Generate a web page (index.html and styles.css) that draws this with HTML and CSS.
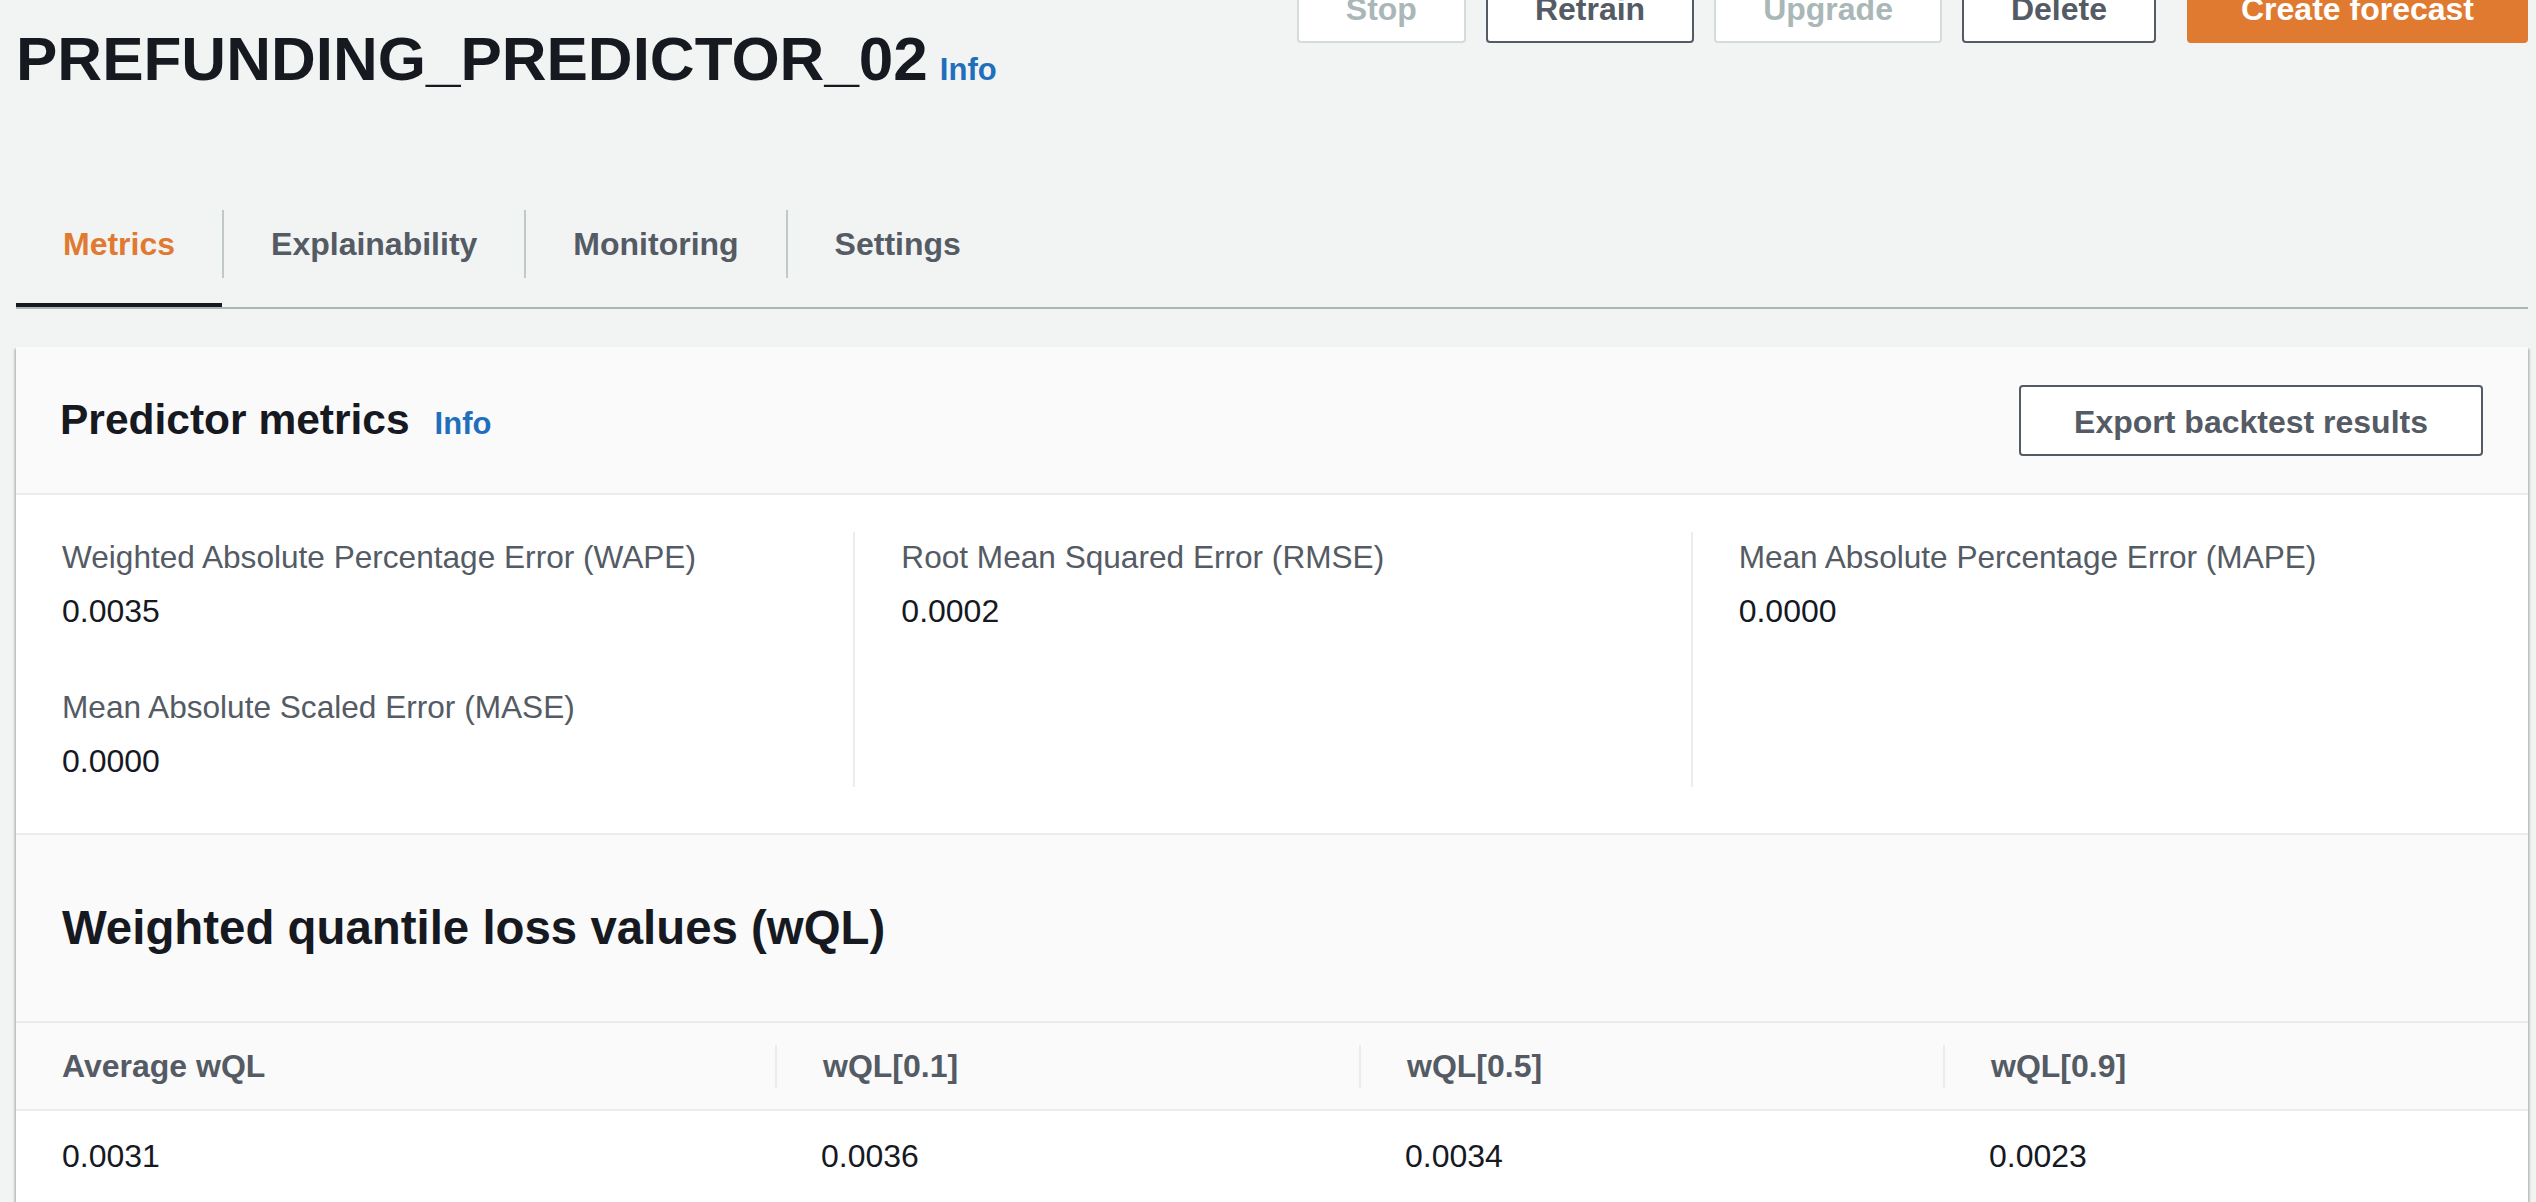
FILE: index.html
```html
<!DOCTYPE html>
<html lang="en">
<head>
<meta charset="utf-8">
<title>PREFUNDING_PREDICTOR_02</title>
<link rel="stylesheet" href="styles.css">
</head>
<body>
<div class="page">
  <header class="page-header">
    <h1 class="title">PREFUNDING_PREDICTOR_02<a class="info info-title">Info</a></h1>
    <div class="actions">
      <button class="btn btn-disabled">Stop</button>
      <button class="btn">Retrain</button>
      <button class="btn btn-disabled">Upgrade</button>
      <button class="btn">Delete</button>
      <button class="btn btn-primary">Create forecast</button>
    </div>
  </header>

  <nav class="tabs">
    <div class="tab active"><span class="tab-label">Metrics</span></div>
    <div class="tab"><span class="tab-label">Explainability</span></div>
    <div class="tab"><span class="tab-label">Monitoring</span></div>
    <div class="tab"><span class="tab-label">Settings</span></div>
  </nav>

  <section class="panel">
    <div class="panel-header">
      <div class="panel-title">
        <h2 class="h2">Predictor metrics</h2><a class="info info-h2">Info</a>
      </div>
      <button class="btn btn-export">Export backtest results</button>
    </div>

    <div class="metrics">
      <div class="metric-col">
        <div class="kv">
          <div class="kv-label">Weighted Absolute Percentage Error (WAPE)</div>
          <div class="kv-value">0.0035</div>
        </div>
        <div class="kv">
          <div class="kv-label">Mean Absolute Scaled Error (MASE)</div>
          <div class="kv-value">0.0000</div>
        </div>
      </div>
      <div class="metric-col">
        <div class="kv">
          <div class="kv-label">Root Mean Squared Error (RMSE)</div>
          <div class="kv-value">0.0002</div>
        </div>
      </div>
      <div class="metric-col">
        <div class="kv">
          <div class="kv-label">Mean Absolute Percentage Error (MAPE)</div>
          <div class="kv-value">0.0000</div>
        </div>
      </div>
    </div>

    <div class="wql-header">
      <h2 class="wql-title">Weighted quantile loss values (wQL)</h2>
    </div>

    <div class="table">
      <div class="trow thead">
        <div class="th">Average wQL</div>
        <div class="th">wQL[0.1]</div>
        <div class="th">wQL[0.5]</div>
        <div class="th">wQL[0.9]</div>
      </div>
      <div class="trow tbody">
        <div class="td">0.0031</div>
        <div class="td">0.0036</div>
        <div class="td">0.0034</div>
        <div class="td">0.0023</div>
      </div>
    </div>
  </section>
</div>
</body>
</html>
```

FILE: styles.css
```css
* {
  box-sizing: border-box;
}

html, body {
  margin: 0;
  padding: 0;
  background: #f2f3f3;
  overflow: hidden;
}

body {
  font-family: "Liberation Sans", Arial, Helvetica, sans-serif;
  font-size: 32px;
  line-height: 46px;
  color: #16191f;
}

.page {
  padding: 0 8px 0 16px;
}

/* ---------- header ---------- */
.page-header {
  display: flex;
  justify-content: space-between;
  align-items: flex-start;
  margin-top: -28px;
}

.title {
  margin: 47px 0 0 0;
  font-size: 62px;
  line-height: 80px;
  font-weight: 700;
  color: #16191f;
  white-space: nowrap;
}

.info {
  font-weight: 700;
  color: #1f6fbc;
  text-decoration: none;
}

.info-title {
  font-size: 31px;
  line-height: 1;
  margin-left: 12px;
}

.info-h2 {
  font-size: 31px;
  margin-left: 25px;
}

.actions {
  display: flex;
  gap: 20px;
}

.btn {
  font-family: "Liberation Sans", Arial, Helvetica, sans-serif;
  font-size: 32px;
  font-weight: 700;
  line-height: 46px;
  padding: 12px 47px 9px;
  border: 2px solid #545b64;
  border-radius: 4px;
  background: #ffffff;
  color: #545b64;
  white-space: nowrap;
}

.btn-disabled {
  border-color: #d5dbdb;
  color: #aab7b8;
}

.btn-primary {
  margin-left: 11px;
  padding-left: 52px;
  padding-right: 52px;
  background: #e07a31;
  border-color: #e07a31;
  color: #ffffff;
}

.btn-export {
  padding-left: 53px;
  padding-right: 53px;
}

/* ---------- tabs ---------- */
.tabs {
  display: flex;
  margin-top: 82px;
  border-bottom: 2px solid #aab7b8;
}

.tab {
  height: 126px;
  padding-top: 4px;
  display: flex;
  align-items: center;
  border-bottom: 4px solid transparent;
}

.tab.active {
  border-bottom-color: #16191f;
}

.tab-label {
  display: block;
  height: 68px;
  line-height: 68px;
  padding: 0 47px;
  font-weight: 700;
  color: #545b64;
}

.tab + .tab .tab-label {
  border-left: 2px solid #c1c8c9;
}

.tab.active .tab-label {
  color: #e07a31;
}

/* ---------- panel ---------- */
.panel {
  margin-top: 38px;
  background: #ffffff;
  box-shadow: 0 2px 2px 0 rgba(0, 28, 36, 0.3), 2px 2px 2px 0 rgba(0, 28, 36, 0.15), -2px 2px 2px 0 rgba(0, 28, 36, 0.15);
}

.panel-header {
  height: 148px;
  display: flex;
  align-items: center;
  justify-content: space-between;
  padding: 0 45px 0 44px;
  background: #fafafa;
  border-bottom: 2px solid #eaeded;
}

.panel-title {
  display: flex;
  align-items: baseline;
}

.h2 {
  margin: 0;
  font-size: 42.5px;
  line-height: 52px;
  font-weight: 700;
  color: #16191f;
}

.metrics {
  display: grid;
  grid-template-columns: repeat(3, 1fr);
  padding: 37px 0 46px;
  border-bottom: 2px solid #eaeded;
}

.metric-col {
  padding: 2px 46px 3px;
}

.metric-col + .metric-col {
  border-left: 2px solid #eaeded;
}

.kv + .kv {
  margin-top: 50px;
}

.kv-label {
  font-size: 31.6px;
  color: #545b64;
}

.kv-value {
  margin-top: 8px;
  color: #16191f;
}

.wql-header {
  height: 188px;
  display: flex;
  align-items: center;
  padding: 0 46px;
  background: #fafafa;
  border-bottom: 2px solid #eaeded;
}

.wql-title {
  margin: 0;
  font-size: 47.4px;
  line-height: 56px;
  font-weight: 700;
  color: #16191f;
}

/* ---------- table ---------- */
.trow {
  display: grid;
  grid-template-columns: 759fr 584fr 584fr 585fr;
  align-items: center;
}

.thead {
  height: 88px;
  background: #fafafa;
  border-bottom: 2px solid #eaeded;
}

.th {
  padding: 0 46px;
  line-height: 43px;
  font-weight: 700;
  color: #545b64;
}

.th + .th {
  border-left: 2px solid #eaeded;
}

.tbody {
  padding: 22px 0 23px;
}

.td {
  padding: 0 46px;
  color: #16191f;
}
```
